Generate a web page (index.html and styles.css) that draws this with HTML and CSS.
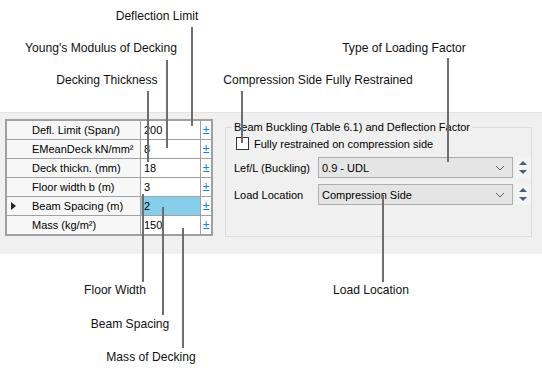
FILE: index.html
```html
<!DOCTYPE html>
<html>
<head>
<meta charset="utf-8">
<link rel="stylesheet" href="styles.css">
</head>
<body>
<div class="screen">
  <div class="band">
    <div class="grid">
      <div class="row"><span class="rh"></span><span class="name">Defl. Limit (Span/)</span><span class="val">200</span><span class="pm">±</span></div>
      <div class="row"><span class="rh"></span><span class="name">EMeanDeck kN/mm²</span><span class="val">8</span><span class="pm">±</span></div>
      <div class="row"><span class="rh"></span><span class="name">Deck thickn. (mm)</span><span class="val">18</span><span class="pm">±</span></div>
      <div class="row"><span class="rh"></span><span class="name">Floor width b (m)</span><span class="val">3</span><span class="pm">±</span></div>
      <div class="row"><span class="rh"><span class="tri"></span></span><span class="name">Beam Spacing (m)</span><span class="val sel">2</span><span class="pm">±</span></div>
      <div class="row last"><span class="rh"></span><span class="name">Mass (kg/m²)</span><span class="val">150</span><span class="pm">±</span></div>
    </div>
    <div class="group">
      <div class="legend">Beam Buckling (Table 6.1) and Deflection Factor</div>
      <div class="check"><span class="box"></span>Fully restrained on compression side</div>
      <div class="field">
        <span class="flabel">Lef/L (Buckling)</span>
        <div class="select">0.9 - UDL<svg class="chev" width="10" height="6" viewBox="0 0 10 6"><path d="M1 1 L5 5 L9 1" fill="none" stroke="#606060" stroke-width="1"/></svg></div>
        <div class="spin"><svg width="8" height="4" viewBox="0 0 8 4"><path d="M0 4 L4 0 L8 4Z" fill="#4b5c7c"/></svg><svg width="8" height="4" viewBox="0 0 8 4"><path d="M0 0 L4 4 L8 0Z" fill="#4b5c7c"/></svg></div>
      </div>
      <div class="field">
        <span class="flabel">Load Location</span>
        <div class="select">Compression Side<svg class="chev" width="10" height="6" viewBox="0 0 10 6"><path d="M1 1 L5 5 L9 1" fill="none" stroke="#606060" stroke-width="1"/></svg></div>
        <div class="spin"><svg width="8" height="4" viewBox="0 0 8 4"><path d="M0 4 L4 0 L8 4Z" fill="#4b5c7c"/></svg><svg width="8" height="4" viewBox="0 0 8 4"><path d="M0 0 L4 4 L8 0Z" fill="#4b5c7c"/></svg></div>
      </div>
    </div>
  </div>

  <div class="notes">
    <div class="lbl" style="left:157px;top:9px">Deflection Limit</div>
    <div class="ln" style="left:191px;top:27px;height:99px"></div>
    <div class="lbl" style="left:101px;top:41px">Young's Modulus of Decking</div>
    <div class="ln" style="left:166px;top:60px;height:88px"></div>
    <div class="lbl" style="left:107px;top:73px">Decking Thickness</div>
    <div class="ln" style="left:147px;top:91px;height:71px"></div>
    <div class="lbl" style="left:318px;top:73px">Compression Side Fully Restrained</div>
    <div class="ln" style="left:241px;top:91px;height:52px"></div>
    <div class="lbl" style="left:404px;top:41px">Type of Loading Factor</div>
    <div class="ln" style="left:447px;top:58px;height:104px"></div>
    <div class="lbl" style="left:115px;top:283px">Floor Width</div>
    <div class="ln" style="left:142px;top:194px;height:88px"></div>
    <div class="lbl" style="left:130px;top:317px">Beam Spacing</div>
    <div class="ln" style="left:162px;top:207px;height:108px"></div>
    <div class="lbl" style="left:151px;top:350px">Mass of Decking</div>
    <div class="ln" style="left:182px;top:228px;height:120px"></div>
    <div class="lbl" style="left:371px;top:283px">Load Location</div>
    <div class="ln" style="left:382px;top:195px;height:87px"></div>
  </div>
</div>
</body>
</html>
```

FILE: styles.css
```css
* { box-sizing: border-box; }
html, body { margin: 0; padding: 0; background: #fff; }
body {
  font-family: "Liberation Sans", Arial, sans-serif;
  font-size: 11px;
  color: #000;
}
.screen {
  position: relative;
  width: 542px;
  height: 369px;
  overflow: hidden;
  padding-top: 112px;
}
.band {
  height: 142px;
  background: #f0f0f0;
  border-top: 1px solid #e3e3e3;
  display: flex;
  align-items: flex-start;
  padding: 6px 10px 0 5px;
  gap: 12px;
}
.grid {
  width: 208px;
  border: 2px solid #a0a0a0;
  background: #fff;
  display: flex;
  flex-direction: column;
}
.row {
  display: grid;
  grid-template-columns: 18px 116px 60px 10px;
  height: 19px;
  border-bottom: 1px solid #a0a0a0;
}
.row.last { border-bottom: none; height: 18px; }
.rh, .name {
  background: #f7f7f7;
  display: flex;
  align-items: center;
}
.rh { justify-content: center; }
.tri {
  width: 0; height: 0;
  border-top: 4px solid transparent;
  border-bottom: 4px solid transparent;
  border-left: 5px solid #222;
  margin-left: -6px;
}
.name {
  padding-left: 7px;
  border-right: 1px solid #a0a0a0;
}
.val {
  display: flex;
  align-items: center;
  padding-left: 3px;
  border-right: 1px solid #a0a0a0;
  background: #fff;
}
.val.sel { background: #87ceeb; }
.pm {
  color: #0a84e0;
  font-size: 12px;
  display: flex;
  align-items: center;
  justify-content: center;
  background: #fff;
}
.group {
  position: relative;
  width: 307px;
  height: 110px;
  margin-top: 8px;
  border: 1px solid #dcdcdc;
  padding: 3px 0 0 8px;
}
.legend {
  position: absolute;
  top: -7px;
  left: 6px;
  padding: 0 2px;
  background: #f0f0f0;
  line-height: 13px;
}
.check {
  display: flex;
  align-items: center;
  gap: 5px;
  margin-top: 5px;
  margin-left: 2px;
  height: 15px;
}
.box {
  width: 13px; height: 13px;
  border: 1px solid #333;
  background: #fff;
}
.field {
  display: flex;
  align-items: center;
  margin-top: 6px;
  height: 21px;
}
.field + .field { margin-top: 6px; }
.flabel { width: 84px; }
.select {
  width: 195px;
  height: 21px;
  background: #e5e5e5;
  border: 1px solid #adadad;
  display: flex;
  align-items: center;
  padding-left: 3px;
  position: relative;
}
.chev { position: absolute; right: 7px; top: 7px; }
.spin {
  width: 16px;
  height: 21px;
  margin-left: 2px;
  background: #f4f4f4;
  display: flex;
  flex-direction: column;
  align-items: center;
  justify-content: center;
  gap: 5px;
}
.notes { position: absolute; inset: 0; pointer-events: none; }
.lbl {
  position: absolute;
  transform: translateX(-50%);
  white-space: nowrap;
  line-height: 14px;
  font-size: 12.1px;
  color: #111;
}
.ln {
  position: absolute;
  width: 2px;
  background: #6e6e6e;
}
```
